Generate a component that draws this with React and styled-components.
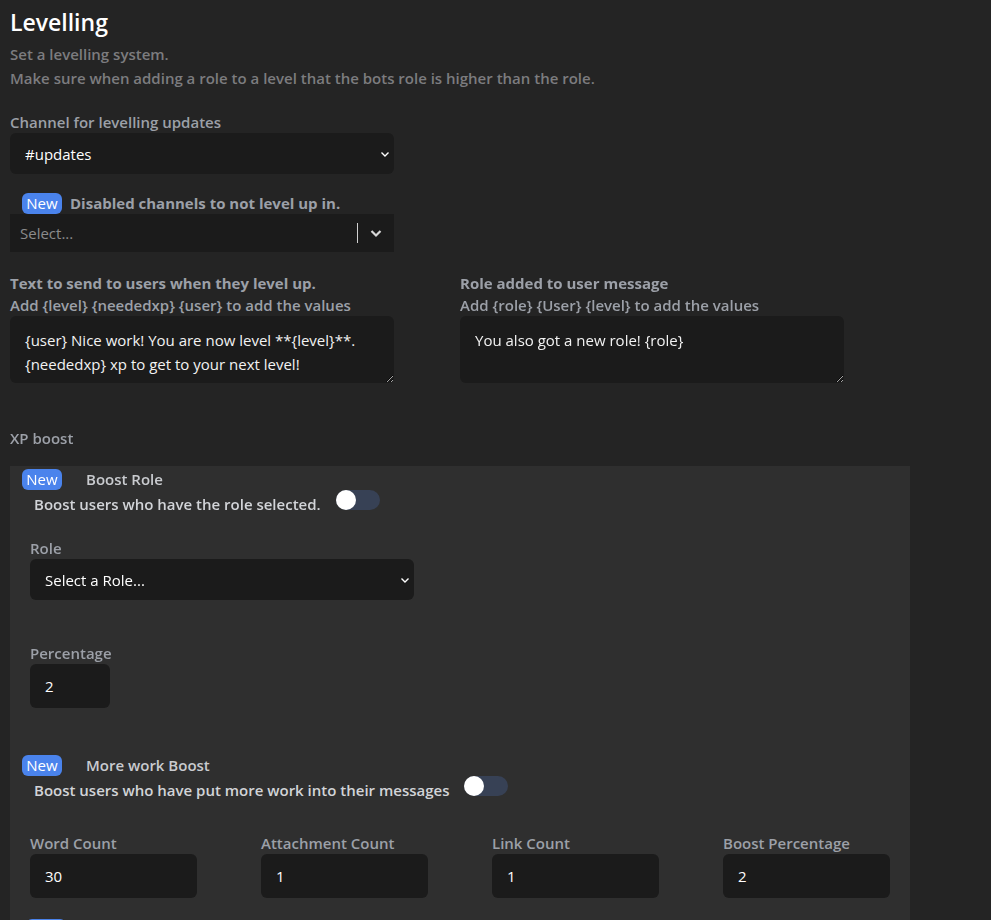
import styled, { createGlobalStyle } from "styled-components";

const GlobalStyle = createGlobalStyle`
  html, body {
    margin: 0;
    background: #242424;
  }
  body {
    font-family: "Open Sans", "Noto Sans", sans-serif;
    color: #fff;
  }
`;

const Page = styled.div`
  padding: 6px 10px 0;
  min-height: 920px;
  box-sizing: border-box;
`;

const Title = styled.h1`
  margin: 0;
  font-size: 23px;
  line-height: 32px;
  font-weight: 600;
  color: #fff;
`;

const Description = styled.p`
  margin: 4px 0 0;
  font-size: 15px;
  line-height: 24px;
  font-weight: 600;
  color: #7c7c7f;
`;

const Label = styled.div`
  margin-top: ${(p) => p.$top || 0}px;
  font-size: 15px;
  line-height: 22px;
  font-weight: ${(p) => (p.$bold ? 700 : 600)};
  color: #9ca0a8;
`;

const Hint = styled.div`
  font-size: 15px;
  line-height: 22px;
  font-weight: 600;
  color: #9ca0a8;
`;

const SelectWrap = styled.div`
  position: relative;
  width: ${(p) => p.$width || 384}px;
`;

const Select = styled.select`
  appearance: none;
  width: 100%;
  height: 41px;
  border: none;
  border-radius: 6px;
  background: #1b1b1b;
  color: #fff;
  font: 400 15px "Open Sans", "Noto Sans", sans-serif;
  padding: 0 15px;
  outline: none;
`;

const Chevron = styled.svg`
  position: absolute;
  right: 4px;
  top: 16px;
  width: 10px;
  height: 10px;
  pointer-events: none;
`;

const BadgeRow = styled.div`
  display: flex;
  align-items: center;
  height: 22px;
  margin-top: ${(p) => p.$top || 0}px;
  margin-left: ${(p) => p.$indent || 0}px;
  gap: ${(p) => p.$gap || 8}px;
`;

const Badge = styled.span`
  display: inline-flex;
  align-items: center;
  justify-content: center;
  width: 40px;
  height: 21px;
  border-radius: 6px;
  background: #4a83ec;
  color: #fff;
  font-size: 15px;
  line-height: 21px;
`;

const BadgeText = styled.span`
  font-size: 15px;
  font-weight: ${(p) => (p.$bold ? 700 : 600)};
  color: ${(p) => (p.$light ? "#c9cbcf" : "#9ca0a8")};
`;

const MultiSelect = styled.div`
  display: flex;
  align-items: center;
  width: 384px;
  height: 38px;
  background: #1b1b1b;
  box-sizing: border-box;
  padding-left: 10px;
`;

const Placeholder = styled.span`
  flex: 1;
  font-size: 15px;
  color: #8b8b8b;
`;

const Separator = styled.span`
  width: 1px;
  height: 20px;
  background: #d0d0d0;
`;

const Indicator = styled.span`
  display: flex;
  align-items: center;
  justify-content: center;
  width: 36px;
  height: 100%;
`;

const Columns = styled.div`
  display: flex;
  gap: 66px;
  margin-top: 20px;
`;

const Column = styled.div`
  display: flex;
  flex-direction: column;
  width: 384px;
`;

const TextArea = styled.textarea`
  width: 384px;
  height: 67px;
  box-sizing: border-box;
  border: none;
  border-radius: 6px;
  background: #1b1b1b;
  color: #f2f2f2;
  font: 400 15px/24px "Open Sans", "Noto Sans", sans-serif;
  padding: 12px 15px;
  resize: both;
  outline: none;
  color-scheme: dark;
  display: block;
`;

const SectionTitle = styled.div`
  margin-top: 44px;
  font-size: 15px;
  line-height: 22px;
  font-weight: 600;
  color: #9ca0a8;
`;

const Panel = styled.div`
  margin-top: 17px;
  width: 900px;
  background: #2f2f2f;
  padding: 2px 20px 40px;
  box-sizing: border-box;
`;

const ToggleRow = styled.div`
  display: flex;
  align-items: flex-start;
  gap: 15px;
  padding-left: 4px;
`;

const ToggleText = styled.span`
  padding-top: 2px;
  font-size: 15px;
  line-height: 24px;
  font-weight: 600;
  color: #d2d4d8;
`;

const Toggle = styled.span`
  position: relative;
  display: inline-block;
  width: 44px;
  height: 20px;
  border-radius: 10px;
  background: #374155;
  flex-shrink: 0;

  &::after {
    content: "";
    position: absolute;
    left: 0;
    top: 0;
    width: 20px;
    height: 20px;
    border-radius: 50%;
    background: #fff;
  }
`;

const NumberInput = styled.input`
  width: ${(p) => p.$width || "100%"};
  height: 44px;
  box-sizing: border-box;
  border: none;
  border-radius: 6px;
  background: #1b1b1b;
  color: #fff;
  font: 400 15px "Open Sans", "Noto Sans", sans-serif;
  padding: 0 15px;
  outline: none;
  display: block;
`;

const CountGrid = styled.div`
  display: grid;
  grid-template-columns: repeat(4, 1fr);
  column-gap: 64px;
  width: 860px;
  margin-top: 30px;
`;

const ChevronIcon = () => (
  <Chevron viewBox="0 0 10 10">
    <path d="M1.5 3.5 L5 7 L8.5 3.5" fill="none" stroke="#fff" strokeWidth="1.4" />
  </Chevron>
);

const counts = [
  { label: "Word Count", value: "30" },
  { label: "Attachment Count", value: "1" },
  { label: "Link Count", value: "1" },
  { label: "Boost Percentage", value: "2" },
];

export default function App() {
  return (
    <Page>
      <GlobalStyle />
      <Title>Levelling</Title>
      <Description>
        Set a levelling system.
        <br />
        Make sure when adding a role to a level that the bots role is higher than the role.
      </Description>

      <Label $top={21}>Channel for levelling updates</Label>
      <SelectWrap>
        <Select defaultValue="updates">
          <option value="updates">#updates</option>
        </Select>
        <ChevronIcon />
      </SelectWrap>

      <BadgeRow $top={18} $indent={12}>
        <Badge>New</Badge>
        <BadgeText $bold>Disabled channels to not level up in.</BadgeText>
      </BadgeRow>
      <MultiSelect>
        <Placeholder>Select...</Placeholder>
        <Separator />
        <Indicator>
          <svg width="14" height="14" viewBox="0 0 14 14">
            <path d="M2.5 5 L7 9.5 L11.5 5" fill="none" stroke="#d8d8d8" strokeWidth="2.2" />
          </svg>
        </Indicator>
      </MultiSelect>

      <Columns>
        <Column>
          <Label $bold>Text to send to users when they level up.</Label>
          <Hint>Add {"{level}"} {"{neededxp}"} {"{user}"} to add the values</Hint>
          <TextArea
            defaultValue={"{user} Nice work! You are now level **{level}**.\n{neededxp} xp to get to your next level!"}
          />
        </Column>
        <Column>
          <Label $bold>Role added to user message</Label>
          <Hint>Add {"{role}"} {"{User}"} {"{level}"} to add the values</Hint>
          <TextArea defaultValue={"You also got a new role! {role}"} />
        </Column>
      </Columns>

      <SectionTitle>XP boost</SectionTitle>
      <Panel>
        <BadgeRow $indent={-8} $gap={24}>
          <Badge>New</Badge>
          <BadgeText $light>Boost Role</BadgeText>
        </BadgeRow>
        <ToggleRow>
          <ToggleText>Boost users who have the role selected.</ToggleText>
          <Toggle />
        </ToggleRow>

        <Label $top={21}>Role</Label>
        <SelectWrap>
          <Select defaultValue="">
            <option value="">Select a Role...</option>
          </Select>
          <ChevronIcon />
        </SelectWrap>

        <Label $top={42}>Percentage</Label>
        <NumberInput $width="80px" defaultValue="2" />

        <BadgeRow $top={46} $indent={-8} $gap={24}>
          <Badge>New</Badge>
          <BadgeText $light>More work Boost</BadgeText>
        </BadgeRow>
        <ToggleRow>
          <ToggleText>Boost users who have put more work into their messages</ToggleText>
          <Toggle />
        </ToggleRow>

        <CountGrid>
          {counts.map((c) => (
            <div key={c.label}>
              <Label>{c.label}</Label>
              <NumberInput defaultValue={c.value} />
            </div>
          ))}
        </CountGrid>

        <BadgeRow $top={20} $indent={-4}>
          <Badge>New</Badge>
        </BadgeRow>
      </Panel>
    </Page>
  );
}
